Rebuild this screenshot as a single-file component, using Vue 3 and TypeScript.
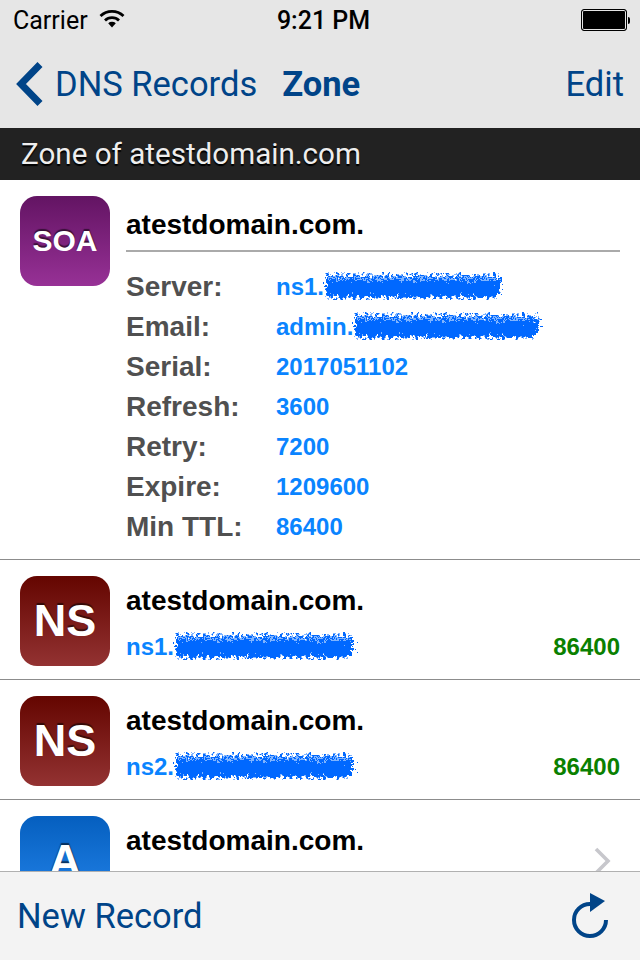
<script setup lang="ts">
interface Detail { key: string; value: string; blur?: number }
interface Rec { id: number; type: string; cls: string; value?: string; blur?: number; ttl?: string; chevron?: boolean }

const details: Detail[] = [
  { key: 'Server:', value: 'ns1.', blur: 186 },
  { key: 'Email:', value: 'admin.', blur: 194 },
  { key: 'Serial:', value: '2017051102' },
  { key: 'Refresh:', value: '3600' },
  { key: 'Retry:', value: '7200' },
  { key: 'Expire:', value: '1209600' },
  { key: 'Min TTL:', value: '86400' },
]
const records: Rec[] = [
  { id: 1, type: 'NS', cls: 'ns', value: 'ns1.', blur: 188, ttl: '86400' },
  { id: 2, type: 'NS', cls: 'ns', value: 'ns2.', blur: 188, ttl: '86400' },
  { id: 3, type: 'A', cls: 'a', chevron: true },
]
</script>

<template>
  <div class="page">
    <svg class="defs" width="0" height="0" aria-hidden="true">
      <filter id="rough" x="-5%" y="-30%" width="110%" height="160%">
        <feTurbulence type="fractalNoise" baseFrequency="0.3" numOctaves="3" seed="7" />
        <feDisplacementMap in="SourceGraphic" scale="15" xChannelSelector="R" yChannelSelector="G" />
      </filter>
    </svg>

    <header class="top">
      <div class="status">
        <div class="status-left">
          <span>Carrier</span>
          <svg class="wifi" width="26" height="19" viewBox="0 0 26 19">
            <path d="M1.5 7 A16.5 16.5 0 0 1 24.5 7" fill="none" stroke="#000" stroke-width="2.8" />
            <path d="M6 11.5 A10 10 0 0 1 20 11.5" fill="none" stroke="#000" stroke-width="2.8" />
            <path d="M9.2 14.2 A5.6 5.6 0 0 1 16.8 14.2 L13 18.5 Z" fill="#000" />
          </svg>
        </div>
        <span class="time">9:21 PM</span>
        <div class="battery"><span class="cell"></span><span class="nub"></span></div>
      </div>
      <nav class="nav">
        <div class="back">
          <svg width="28" height="44" viewBox="0 0 28 44">
            <path d="M25 2.5 L6 22 L25 41.5" fill="none" stroke="#004488" stroke-width="7" />
          </svg>
          <span>DNS Records</span>
        </div>
        <strong class="title">Zone</strong>
        <span class="edit">Edit</span>
      </nav>
    </header>

    <div class="section">Zone of atestdomain.com</div>

    <main class="list">
      <section class="row soa-row">
        <div class="icon soa">SOA</div>
        <div class="body">
          <h2 class="name soa-name">atestdomain.com.</h2>
          <div class="rule"></div>
          <div v-for="d in details" :key="d.key" class="detail">
            <span class="k">{{ d.key }}</span>
            <span class="v">{{ d.value }}<svg v-if="d.blur" class="scribble" :width="d.blur" height="30" :viewBox="`0 0 ${d.blur} 30`" preserveAspectRatio="none"><g fill="none" stroke="#0068ff" filter="url(#rough)"><path :d="`M6 5 H${d.blur - 6}`" stroke-width="3" /><path :d="`M5 11 H${d.blur - 4} M6 16 H${d.blur - 5} M7 22 H${d.blur - 8}`" stroke-width="7" /></g></svg></span>
          </div>
        </div>
      </section>

      <section v-for="r in records" :key="r.id" class="row rec-row">
        <div class="icon" :class="r.cls">{{ r.type }}</div>
        <div class="body">
          <h2 class="name">atestdomain.com.</h2>
          <div v-if="r.value" class="line">
            <span class="v">{{ r.value }}<svg v-if="r.blur" class="scribble" :width="r.blur" height="30" :viewBox="`0 0 ${r.blur} 30`" preserveAspectRatio="none"><g fill="none" stroke="#0068ff" filter="url(#rough)"><path :d="`M6 5 H${r.blur - 6}`" stroke-width="3" /><path :d="`M5 11 H${r.blur - 4} M6 16 H${r.blur - 5} M7 22 H${r.blur - 8}`" stroke-width="7" /></g></svg></span>
            <span class="ttl">{{ r.ttl }}</span>
          </div>
        </div>
        <svg v-if="r.chevron" class="chev" width="18" height="28" viewBox="0 0 18 28">
          <path d="M2 2 L14 14 L2 26" fill="none" stroke="#c7c7cc" stroke-width="3.6" />
        </svg>
      </section>
    </main>

    <footer class="bar">
      <span>New Record</span>
      <svg width="40" height="48" viewBox="0 0 40 48">
        <path d="M20 12 A16 16 0 1 0 36 28" fill="none" stroke="#004488" stroke-width="4" />
        <path d="M20 1 L35 9 L20 20 Z" fill="#004488" />
      </svg>
    </footer>
  </div>
</template>

<style>
html, body { margin: 0; background: #fff; }
</style>

<style scoped>
.page {
  width: 640px;
  height: 960px;
  display: flex;
  flex-direction: column;
  overflow: hidden;
  font-family: "Liberation Sans", Arial, sans-serif;
  background: #fff;
}
.defs { position: absolute; }
.top { background: #e6e6e6; height: 128px; flex: none; font-family: Roboto, "Liberation Sans", sans-serif; }
.status {
  height: 40px;
  display: grid;
  grid-template-columns: 1fr auto 1fr;
  align-items: center;
  padding: 0 0 0 13px;
  font-size: 25px;
  color: #000;
}
.status-left { display: flex; align-items: center; gap: 11px; }
.wifi { margin-top: -4px; }
.time { font-weight: 500; font-size: 25px; margin-left: -6px; }
.battery { justify-self: end; display: flex; align-items: center; margin-right: 10px; }
.cell {
  width: 44px; height: 20px;
  background: #000;
  border: 1px solid #000;
  box-shadow: inset 0 0 0 1px #e6e6e6;
  border-radius: 3px;
}
.nub { width: 2px; height: 7px; background: #000; border-radius: 0 2px 2px 0; margin-left: 1px; }
.nav {
  height: 88px;
  display: flex;
  align-items: center;
  padding: 0 16px 0 15px;
  color: #004488;
  font-size: 34.5px;
}
.back { display: flex; align-items: center; gap: 12px; }
.title { margin-left: 25px; font-weight: 700; font-size: 34.5px; }
.edit { margin-left: auto; }
.section {
  flex: none;
  height: 52px;
  line-height: 52px;
  padding-left: 21px;
  background: #222;
  color: #eee;
  font-family: Roboto, "Liberation Sans", sans-serif;
  font-size: 29.6px;
  text-shadow: 0 2px 1px #000;
}
.list { flex: 1; min-height: 0; overflow: hidden; }
.row {
  display: flex;
  align-items: flex-start;
  gap: 16px;
  padding: 16px 20px 0;
  box-sizing: border-box;
  border-bottom: 1px solid #8c8c8c;
  position: relative;
}
.soa-row { height: 380px; }
.rec-row { height: 120px; }
.icon {
  width: 90px; height: 90px;
  flex: none;
  border-radius: 17px;
  display: flex;
  align-items: center;
  justify-content: center;
  color: #fff;
  font-weight: 700;
  font-size: 45px;
  text-shadow: 0 -2px 1px rgba(0, 0, 0, .55);
}
.soa { font-size: 30px; background: linear-gradient(#631463, #973196); }
.ns { background: linear-gradient(#640500, #933232); }
.a { background: linear-gradient(#055fbf, #2484ea); }
.body { flex: 1; min-width: 0; }
.name {
  margin: 9px 0 0;
  font-size: 28px;
  line-height: 32px;
  font-weight: 700;
  color: #000;
}
.soa-name { line-height: 34px; margin-top: 12px; }
.rule { height: 2px; background: #aaa; margin: 8px 0 15px; }
.detail {
  display: flex;
  align-items: center;
  height: 40px;
}
.k { width: 150px; font-size: 28px; font-weight: 700; color: #505050; }
.v { display: inline-flex; align-items: center; font-size: 24px; font-weight: 700; color: #0a84ff; }
.scribble { margin-left: -4px; flex: none; }
.line {
  display: flex;
  align-items: center;
  justify-content: space-between;
  margin-top: 14px;
  height: 32px;
}
.ttl { font-size: 24px; font-weight: 700; color: #0a8000; }
.chev { position: absolute; right: 28px; top: 47px; }
.bar {
  flex: none;
  height: 89px;
  box-sizing: border-box;
  border-top: 1px solid #b0b0b0;
  background: #f3f3f3;
  display: flex;
  align-items: center;
  justify-content: space-between;
  padding: 0 30px 0 17px;
  color: #004488;
  font-family: Roboto, "Liberation Sans", sans-serif;
  font-size: 34.5px;
}
</style>
